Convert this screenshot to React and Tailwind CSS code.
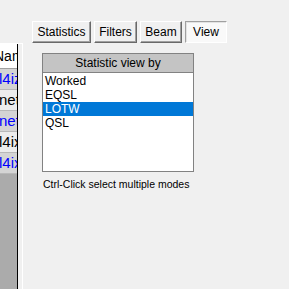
import React from 'react';

const rows = [
    { text: 'l4iz', blue: true },
    { text: 'net', blue: false },
    { text: 'net', blue: true },
    { text: 'l4ix', blue: false },
    { text: 'l4ix', blue: true },
];

const tabs = [
    { label: 'Statistics', w: 'w-[59px]' },
    { label: 'Filters', w: 'w-[43px]' },
    { label: 'Beam', w: 'w-[42px]' },
    { label: 'View', w: 'w-[42px]', active: true },
];

const modes = ['Worked', 'EQSL', 'LOTW', 'QSL'];

const App = () => {
    return (
        <div className="w-[289px] h-[289px] bg-[#f0f0f0] flex overflow-hidden text-black" style={{ fontFamily: '"Liberation Sans", Arial, sans-serif' }}>
            {/* left grid, clipped by the splitter */}
            <div className="w-[23px] shrink-0 pt-[43px] flex flex-col">
                <div className="flex-1 border-t border-r border-white pr-[4px] flex">
                    <div className="w-[18px] border-r border-black bg-[#ababab] overflow-hidden flex flex-col">
                        <div className="h-[25px] bg-white border-b border-[#a0a0a0] flex items-center whitespace-nowrap text-[14px]">
                            <span className="ml-[-6px]">Nam</span>
                        </div>
                        {rows.map((r, i) => (
                            <div
                                key={i}
                                className={`h-[21px] border-b border-[#b8b8b8] flex items-center whitespace-nowrap text-[15px] ${r.blue ? 'bg-[#d4d4d4] text-[#0000ff]' : 'bg-[#ececec] text-black'}`}
                            >
                                <span className="ml-[-1px]">{r.text}</span>
                            </div>
                        ))}
                    </div>
                </div>
            </div>

            {/* right side */}
            <div className="flex-1 pt-[21px] pl-[9px] flex flex-col">
                <div className="flex gap-[3px] h-[22px]">
                    {tabs.map((t) => (
                        <div
                            key={t.label}
                            className={`${t.w} h-[22px] flex items-center justify-center text-[12px] border ${
                                t.active
                                    ? 'border-t-[#a0a0a0] border-l-[#a0a0a0] border-b-white border-r-white bg-[#f9f9f9] shadow-[inset_1px_1px_0_#e3e3e3]'
                                    : 'border-t-white border-l-white border-b-[#696969] border-r-[#696969] bg-[#f0f0f0] shadow-[inset_-1px_-1px_0_#a0a0a0]'
                            }`}
                        >
                            {t.label}
                        </div>
                    ))}
                </div>

                <div className="ml-[10px] mt-[10px] w-[152px] h-[119px] border border-[#828282] bg-white flex flex-col">
                    <div className="h-[19px] bg-[#c4c4c4] border-b border-[#828282] flex items-center justify-center text-[12px]">
                        Statistic view by
                    </div>
                    <div className="flex flex-col pt-[1px]">
                        {modes.map((m) => (
                            <div
                                key={m}
                                className={`h-[14px] leading-[14px] pl-[2px] text-[12px] ${m === 'LOTW' ? 'bg-[#0078d7] text-white' : ''}`}
                            >
                                {m}
                            </div>
                        ))}
                    </div>
                </div>

                <div className="ml-[11px] mt-[6px] text-[10.5px] leading-[12px] text-[#000]">
                    Ctrl-Click select multiple modes
                </div>
            </div>
        </div>
    );
};

export default App;
